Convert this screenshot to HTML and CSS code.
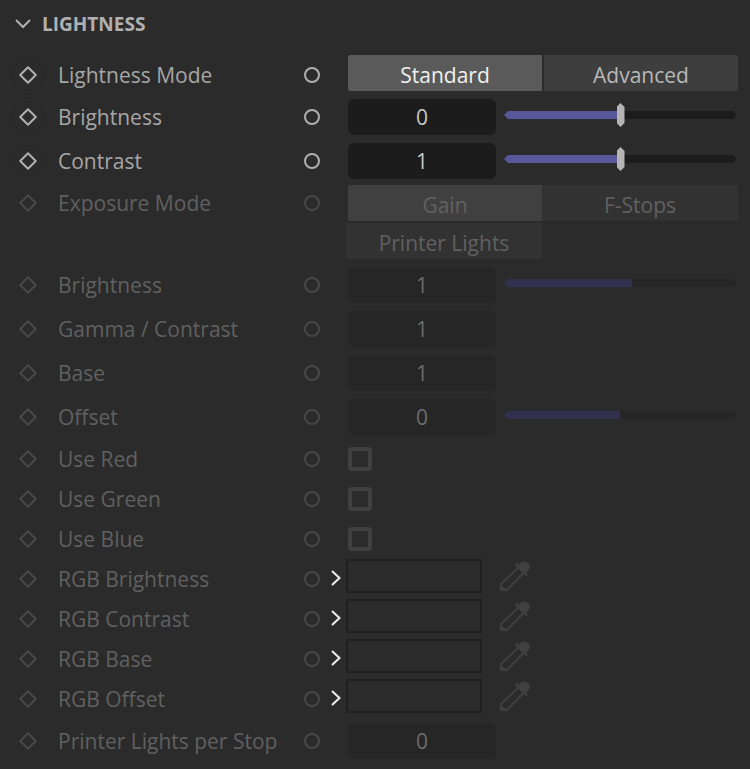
FILE: index.html
```html
<!DOCTYPE html>
<html lang="en">
<head>
<meta charset="utf-8">
<meta name="viewport" content="width=device-width, initial-scale=1">
<title>Lightness</title>
<link rel="stylesheet" href="styles.css">
</head>
<body>
<svg class="defs" aria-hidden="true">
  <symbol id="diamond" viewBox="0 0 18 18"><path d="M9 1.2 16.8 9 9 16.8 1.2 9Z" fill="none" stroke="currentColor" stroke-width="2" stroke-linejoin="round"/></symbol>
  <symbol id="arrow" viewBox="0 0 12 18"><path d="M2 1 9.500 8 2 15" fill="none" stroke="currentColor" stroke-width="2"/></symbol>
  <symbol id="dropper" viewBox="0 0 30 30">
    <path d="M18.500 6.500 1 23v6h6L24 11.500" fill="none" stroke="currentColor" stroke-width="2"/>
    <path d="M0 23v7h8Z" fill="currentColor"/>
    <circle cx="24.300" cy="6" r="5.500" fill="currentColor"/>
    <path d="M17.500 4.500 25.500 12.500 21 9Z" fill="currentColor"/>
    <path d="M16.500 3.500 26 13.200" stroke="currentColor" stroke-width="3" stroke-linecap="round"/>
  </symbol>
</svg>
<main class="panel">
  <h1 class="title">
    <button class="toggle" aria-expanded="true"><svg class="chevron" viewBox="0 0 16 10" aria-hidden="true"><path d="M1 1 8 8l7-7" fill="none" stroke="currentColor" stroke-width="2"/></svg>LIGHTNESS</button>
  </h1>

  <div class="row">
    <button class="key" aria-label="Keyframe"><svg><use href="#diamond"/></svg></button>
    <span class="name" id="mode">Lightness Mode</span>
    <button class="port" aria-label="Connect"></button>
    <div class="control segments" role="group" aria-labelledby="mode">
      <button class="segment selected" aria-pressed="true">Standard</button>
      <button class="segment" aria-pressed="false">Advanced</button>
    </div>
  </div>
  <div class="row tall">
    <button class="key" aria-label="Keyframe"><svg><use href="#diamond"/></svg></button>
    <label class="name" for="brightness">Brightness</label>
    <button class="port" aria-label="Connect"></button>
    <div class="control">
      <input class="number" id="brightness" type="text" value="0">
      <span class="slider" style="--fill: 50%"><input type="range" min="0" max="100" value="50" aria-label="Brightness"></span>
    </div>
  </div>
  <div class="row tall">
    <button class="key" aria-label="Keyframe"><svg><use href="#diamond"/></svg></button>
    <label class="name" for="contrast">Contrast</label>
    <button class="port" aria-label="Connect"></button>
    <div class="control">
      <input class="number" id="contrast" type="text" value="1">
      <span class="slider" style="--fill: 50%"><input type="range" min="0" max="100" value="50" aria-label="Contrast"></span>
    </div>
  </div>

  <div class="row off">
    <button class="key" disabled aria-label="Keyframe"><svg><use href="#diamond"/></svg></button>
    <span class="name" id="exposure">Exposure Mode</span>
    <button class="port" disabled aria-label="Connect"></button>
    <div class="control segments wrapped" role="group" aria-labelledby="exposure">
      <button class="segment selected" disabled>Gain</button>
      <button class="segment" disabled>F-Stops</button>
      <button class="segment" disabled>Printer Lights</button>
    </div>
  </div>
  <div class="row tall off">
    <button class="key" disabled aria-label="Keyframe"><svg><use href="#diamond"/></svg></button>
    <label class="name" for="gain">Brightness</label>
    <button class="port" disabled aria-label="Connect"></button>
    <div class="control">
      <input class="number" id="gain" type="text" value="1" disabled>
      <span class="slider" style="--fill: 55%"><input type="range" min="0" max="100" value="55" aria-label="Brightness" disabled></span>
    </div>
  </div>
  <div class="row tall off">
    <button class="key" disabled aria-label="Keyframe"><svg><use href="#diamond"/></svg></button>
    <label class="name" for="gamma">Gamma / Contrast</label>
    <button class="port" disabled aria-label="Connect"></button>
    <div class="control"><input class="number" id="gamma" type="text" value="1" disabled></div>
  </div>
  <div class="row tall off">
    <button class="key" disabled aria-label="Keyframe"><svg><use href="#diamond"/></svg></button>
    <label class="name" for="base">Base</label>
    <button class="port" disabled aria-label="Connect"></button>
    <div class="control"><input class="number" id="base" type="text" value="1" disabled></div>
  </div>
  <div class="row tall off">
    <button class="key" disabled aria-label="Keyframe"><svg><use href="#diamond"/></svg></button>
    <label class="name" for="offset">Offset</label>
    <button class="port" disabled aria-label="Connect"></button>
    <div class="control">
      <input class="number" id="offset" type="text" value="0" disabled>
      <span class="slider" style="--fill: 50%"><input type="range" min="0" max="100" value="50" aria-label="Offset" disabled></span>
    </div>
  </div>

  <div class="row off">
    <button class="key" disabled aria-label="Keyframe"><svg><use href="#diamond"/></svg></button>
    <label class="name" for="red">Use Red</label>
    <button class="port" disabled aria-label="Connect"></button>
    <div class="control"><input class="check" id="red" type="checkbox" disabled></div>
  </div>
  <div class="row off">
    <button class="key" disabled aria-label="Keyframe"><svg><use href="#diamond"/></svg></button>
    <label class="name" for="green">Use Green</label>
    <button class="port" disabled aria-label="Connect"></button>
    <div class="control"><input class="check" id="green" type="checkbox" disabled></div>
  </div>
  <div class="row off">
    <button class="key" disabled aria-label="Keyframe"><svg><use href="#diamond"/></svg></button>
    <label class="name" for="blue">Use Blue</label>
    <button class="port" disabled aria-label="Connect"></button>
    <div class="control"><input class="check" id="blue" type="checkbox" disabled></div>
  </div>

  <div class="row off">
    <button class="key" disabled aria-label="Keyframe"><svg><use href="#diamond"/></svg></button>
    <label class="name" for="rgb-brightness">RGB Brightness</label>
    <button class="port" disabled aria-label="Connect"></button>
    <button class="expand" aria-label="Expand"><svg><use href="#arrow"/></svg></button>
    <div class="control color"><button class="swatch" id="rgb-brightness" disabled></button><button class="pick" disabled aria-label="Pick color"><svg><use href="#dropper"/></svg></button></div>
  </div>
  <div class="row off">
    <button class="key" disabled aria-label="Keyframe"><svg><use href="#diamond"/></svg></button>
    <label class="name" for="rgb-contrast">RGB Contrast</label>
    <button class="port" disabled aria-label="Connect"></button>
    <button class="expand" aria-label="Expand"><svg><use href="#arrow"/></svg></button>
    <div class="control color"><button class="swatch" id="rgb-contrast" disabled></button><button class="pick" disabled aria-label="Pick color"><svg><use href="#dropper"/></svg></button></div>
  </div>
  <div class="row off">
    <button class="key" disabled aria-label="Keyframe"><svg><use href="#diamond"/></svg></button>
    <label class="name" for="rgb-base">RGB Base</label>
    <button class="port" disabled aria-label="Connect"></button>
    <button class="expand" aria-label="Expand"><svg><use href="#arrow"/></svg></button>
    <div class="control color"><button class="swatch" id="rgb-base" disabled></button><button class="pick" disabled aria-label="Pick color"><svg><use href="#dropper"/></svg></button></div>
  </div>
  <div class="row off">
    <button class="key" disabled aria-label="Keyframe"><svg><use href="#diamond"/></svg></button>
    <label class="name" for="rgb-offset">RGB Offset</label>
    <button class="port" disabled aria-label="Connect"></button>
    <button class="expand" aria-label="Expand"><svg><use href="#arrow"/></svg></button>
    <div class="control color"><button class="swatch" id="rgb-offset" disabled></button><button class="pick" disabled aria-label="Pick color"><svg><use href="#dropper"/></svg></button></div>
  </div>
  <div class="row tall off">
    <button class="key" disabled aria-label="Keyframe"><svg><use href="#diamond"/></svg></button>
    <label class="name" for="lights">Printer Lights per Stop</label>
    <button class="port" disabled aria-label="Connect"></button>
    <div class="control"><input class="number" id="lights" type="text" value="0" disabled></div>
  </div>
</main>
</body>
</html>
```
FILE: styles.css
```css
*, *::before { box-sizing: border-box; }

body {
  margin: 0;
  background: #2b2b2b;
  color: #a6a6a6;
  font: 21px/28px "Segoe UI", "Open Sans", "Noto Sans", sans-serif;
}

button, input {
  margin: 0;
  padding: 0;
  border: 0;
  background: none;
  color: inherit;
  font: inherit;
}

.defs { display: none; }

.panel { padding: 0 12px 6px; }

.title {
  display: flex;
  margin: 0;
  padding: 10px 3px 17px;
  font-size: 19px;
  font-weight: 700;
}

.toggle {
  display: flex;
  align-items: center;
  gap: 11px;
  color: #b0b0b0;
}

.chevron { width: 16px; height: 10px; }

.row {
  --line: 40px;
  --field: #1c1c1c;
  --value: #c8c8c8;
  --bar: #565899;
  display: grid;
  grid-template-columns: 46px 242px 24px 24px minmax(0, 1fr);
  grid-template-rows: minmax(var(--line), auto);
  align-items: start;
}

.tall { --line: 44px; }

.off {
  --field: #262626;
  --value: #6c6c6c;
  --bar: #31304f;
  color: #606060;
}

.key, .name, .port, .expand {
  display: flex;
  align-items: center;
  height: var(--line);
}

.name { white-space: nowrap; }

.key svg {
  width: 32px;
  height: 32px;
  padding: 6px;
  border: 1px solid #282828;
  border-radius: 50%;
  color: #b0b0b0;
}

.off .key svg { border-color: transparent; color: #484848; }

.port { justify-content: center; }

.port::before {
  content: "";
  width: 16px;
  height: 16px;
  border: 2px solid #b0b0b0;
  border-radius: 50%;
}

.off .port::before { border-color: #484848; }

.expand { justify-content: center; color: #f0f0f0; }
.expand svg { width: 12px; height: 18px; }

.control {
  grid-column: 5;
  display: flex;
  align-items: center;
  gap: 8px;
  min-height: var(--line);
}

.segments {
  display: grid;
  grid-template-columns: 1fr 1fr;
  gap: 2px;
  align-items: start;
}

.segment {
  height: 36px;
  padding-top: 4px;
  background: #3e3e3e;
  color: #b8b8b8;
  line-height: 32px;
}

.segment:first-child { border-radius: 2px 0 0 2px; }
.segment:nth-child(2) { border-radius: 0 2px 2px 0; }
.segment.selected { background: #5a5a5a; color: #f0f0f0; }

.wrapped { padding: 2px 0 4px; }
.off .segment { background: #323232; color: #606060; }
.off .segment.selected { background: #404040; }
.wrapped .segment:nth-child(2) { margin-left: -2px; }
.wrapped .segment:nth-child(3) { margin-left: -2px; border-radius: 2px; }

.number {
  width: 148px;
  height: 36px;
  border-radius: 6px;
  background: var(--field);
  color: var(--value);
  text-align: center;
}

.slider {
  display: grid;
  flex: 1;
  align-self: flex-start;
  align-items: center;
  height: 40px;
  margin-right: 1px;
}

.slider::before,
.slider input { grid-area: 1 / 1; }

.slider::before {
  content: "";
  height: 8px;
  background: linear-gradient(to right, var(--bar) var(--fill), var(--field) var(--fill));
  clip-path: polygon(0 50%, 4px 0, calc(100% - 4px) 0, 100% 50%, calc(100% - 4px) 100%, 4px 100%);
}

.slider input {
  width: 100%;
  height: 24px;
  appearance: none;
  -webkit-appearance: none;
}

.slider input::-webkit-slider-thumb {
  -webkit-appearance: none;
  width: 8px;
  height: 24px;
  background: #b4b4b4;
  clip-path: polygon(50% 0, 100% 4px, 100% 20px, 50% 100%, 0 20px, 0 4px);
}

.slider input:disabled::-webkit-slider-thumb { visibility: hidden; }

.check {
  width: 24px;
  height: 24px;
  appearance: none;
  border: 4px solid #404040;
  border-radius: 4px;
}

.color {
  align-items: flex-start;
  gap: 18px;
  margin-left: -2px;
}

.swatch {
  width: 136px;
  height: 34px;
  border: 2px solid #202020;
}

.pick {
  display: flex;
  padding-top: 2px;
  color: #404040;
}

.pick svg { width: 30px; height: 30px; }
```
